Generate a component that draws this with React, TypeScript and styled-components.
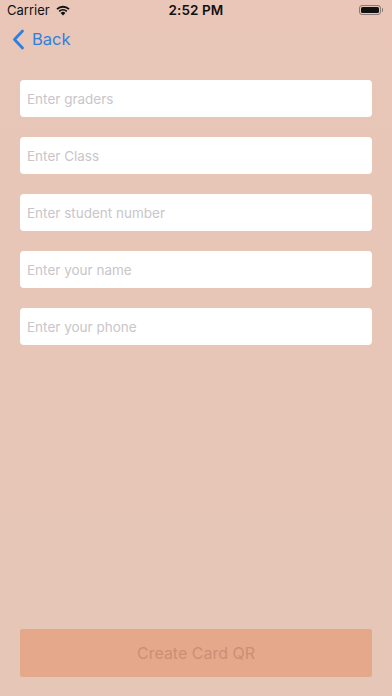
import styled, { createGlobalStyle } from 'styled-components';

const GlobalStyle = createGlobalStyle`
  html, body {
    margin: 0;
    padding: 0;
    background: #e8c6b7;
  }
  * {
    box-sizing: border-box;
  }
`;

const fields = [
  'Enter graders',
  'Enter Class',
  'Enter student number',
  'Enter your name',
  'Enter your phone',
];

function App(): React.ReactElement {
  return (
    <>
      <GlobalStyle />
      <Screen>
        <StatusBar>
          <div className="left">
            <span>Carrier</span>
            <svg width="16" height="12" viewBox="0 0 16 12">
              <path
                d="M8 11.5 L5.6 8.9 A3.6 3.6 0 0 1 10.4 8.9 Z"
                fill="#111"
              />
              <path
                d="M3.6 6.8 A6.4 6.4 0 0 1 12.4 6.8 L11.2 8.1 A4.7 4.7 0 0 0 4.8 8.1 Z"
                fill="#111"
              />
              <path
                d="M1.4 4.5 A9.6 9.6 0 0 1 14.6 4.5 L13.4 5.8 A7.9 7.9 0 0 0 2.6 5.8 Z"
                fill="#111"
              />
            </svg>
          </div>
          <Time>2:52 PM</Time>
          <div className="right">
            <Battery>
              <div className="level" />
            </Battery>
            <div className="cap" />
          </div>
        </StatusBar>
        <NavBar>
          <BackLink href="#null">
            <svg width="13" height="21" viewBox="0 0 13 21">
              <path
                d="M10.5 2 L2.5 10.5 L10.5 19"
                fill="none"
                stroke="#2f7fe3"
                strokeWidth="2.8"
                strokeLinecap="round"
                strokeLinejoin="round"
              />
            </svg>
            <span>Back</span>
          </BackLink>
        </NavBar>
        <Form>
          {fields.map((f) => (
            <Field key={f} placeholder={f} />
          ))}
        </Form>
        <Footer>
          <CreateButton disabled>Create Card QR</CreateButton>
        </Footer>
      </Screen>
    </>
  );
}

export default App;

const Screen = styled.div`
  width: 392px;
  height: 696px;
  display: flex;
  flex-direction: column;
  background: linear-gradient(180deg, #e9c6b7 0%, #e6c6b7 100%);
  font-family: 'Inter', 'Liberation Sans', sans-serif;
  overflow: hidden;
`;

const StatusBar = styled.div`
  height: 20px;
  padding: 0 7px;
  display: grid;
  grid-template-columns: 1fr auto 1fr;
  align-items: center;
  color: #111;

  & .left {
    display: flex;
    align-items: center;
    gap: 5px;
    font-size: 13px;
  }

  & .right {
    display: flex;
    align-items: center;
    justify-content: flex-end;
    padding-right: 2px;
  }

  & .cap {
    width: 1.5px;
    height: 4px;
    background: #8a7a72;
    border-radius: 0 1px 1px 0;
    margin-left: 1px;
  }
`;

const Time = styled.div`
  font-size: 13.5px;
  font-weight: 600;
  letter-spacing: 0.1px;
`;

const Battery = styled.div`
  width: 22px;
  height: 10.5px;
  border: 1px solid #8a7a72;
  border-radius: 3px;
  padding: 1px;

  & .level {
    width: 100%;
    height: 100%;
    background: #111;
    border-radius: 1.5px;
  }
`;

const NavBar = styled.div`
  height: 38px;
  display: flex;
  align-items: center;
  padding-left: 12px;
`;

const BackLink = styled.a`
  display: flex;
  align-items: center;
  gap: 7px;
  color: #2f7fe3;
  text-decoration: none;
  font-size: 16.5px;
`;

const Form = styled.div`
  display: flex;
  flex-direction: column;
  gap: 20px;
  padding: 22px 20px 0;
`;

const Field = styled.input`
  height: 37px;
  width: 100%;
  border: none;
  outline: none;
  border-radius: 4px;
  background: #ffffff;
  padding: 0 7px;
  font-family: 'Inter', 'Liberation Sans', sans-serif;
  font-size: 13.5px;
  color: #333;

  &::placeholder {
    color: #c9c6c9;
  }
`;

const Footer = styled.div`
  margin-top: auto;
  padding: 0 20px 19px;
`;

const CreateButton = styled.button`
  width: 100%;
  height: 48px;
  border: 1px solid #e3a98e;
  border-radius: 2px;
  background: #e6a88a;
  color: #cc8f74;
  font-family: 'Inter', 'Liberation Sans', sans-serif;
  font-size: 16px;
  cursor: default;
`;
